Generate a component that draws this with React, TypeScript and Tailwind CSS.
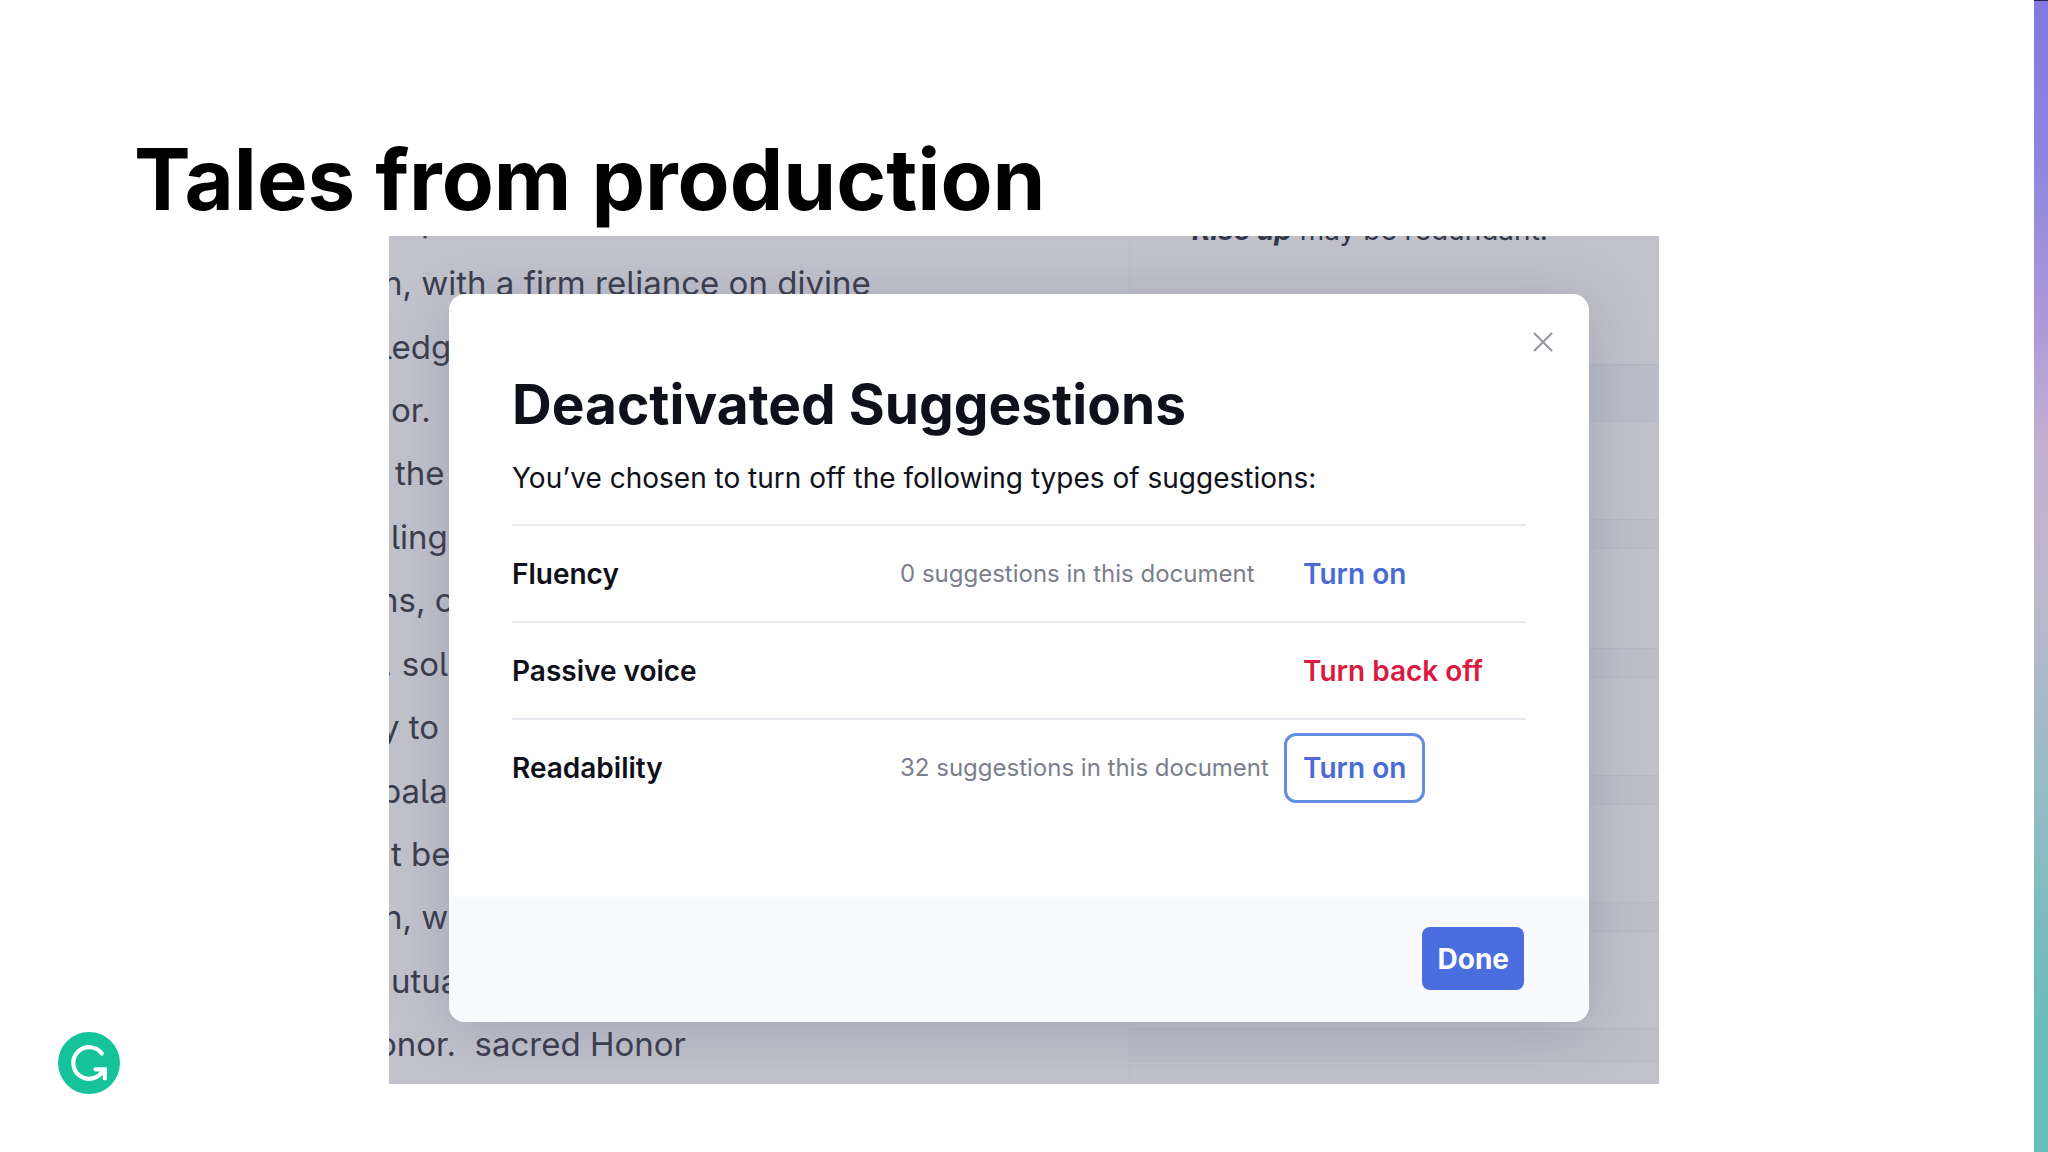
import { clsx } from "clsx";

const documentLines = [
  { text: "p", indent: "ml-8" },
  { text: "n, with a firm reliance on divine", indent: "-ml-1.5" },
  { text: "ledge", indent: "-ml-1.5" },
  { text: "or.", indent: "ml-0.5" },
  { text: "the", indent: "ml-1.5" },
  { text: "ling", indent: "ml-0.5" },
  { text: "ns, o", indent: "-ml-2.5" },
  { text: ". sol", indent: "-ml-1.5" },
  { text: "y to", indent: "-ml-2" },
  { text: "palac", indent: "-ml-2" },
  { text: "t be", indent: "ml-0.5" },
  { text: "n, w", indent: "-ml-1.5" },
  { text: "utua", indent: "ml-0.5" },
  { text: "onor.\u00a0 sacred Honor", indent: "-ml-3" },
];

const suggestions = [
  { name: "Fluency", count: "0 suggestions in this document", action: "Turn on" },
  { name: "Passive voice", count: "", action: "Turn back off", danger: true },
  { name: "Readability", count: "32 suggestions in this document", action: "Turn on", focused: true },
];

const DocumentText = () => (
  <div className="col-start-1 row-start-1 -mt-12 mb-2 grid auto-rows-fr text-[33px] text-[#3b3d4c] [font-feature-settings:'cv05']">
    {documentLines.map((line) => (
      <p key={line.text} className={clsx("flex items-center whitespace-pre leading-10", line.indent)}>
        {line.text}
      </p>
    ))}
  </div>
);

const SidePanel = () => (
  <aside className="col-start-1 row-start-1 ml-[740px] flex flex-col border-l border-[#b9bac7] bg-[#c1c1cb]">
    <div className="h-32">
      <p className="-mt-[22px] ml-[62px] whitespace-nowrap text-[28px] leading-8 text-[#34364a]">
        <b className="italic">Rise up</b> may be redundant.
      </p>
    </div>
    <div className="h-[57px] border-t border-[#b4b7c4] bg-[#babdc9]" />
    <div className="h-[99px] border-y border-[#b8b8c5]" />
    <div className="h-7 bg-[#bebec9]" />
    <div className="h-[101px] border-y border-[#b8b8c5]" />
    <div className="h-7 bg-[#bebec9]" />
    <div className="h-[99px] border-y border-[#b8b8c5]" />
    <div className="h-7 bg-[#bebec9]" />
    <div className="h-[99px] border-y border-[#b8b8c5]" />
    <div className="h-7 bg-[#bebec9]" />
    <div className="h-[98px] border-y border-[#b8b8c5]" />
    <div className="h-8 bg-[#bebec9]" />
    <div className="flex-1 border-t border-[#b8b8c5]" />
  </aside>
);

const Modal = () => (
  <section
    role="dialog"
    aria-labelledby="modal-title"
    className="z-10 col-start-1 row-start-1 mt-[58px] mr-[70px] mb-[62px] ml-[60px] flex flex-col overflow-hidden rounded-2xl bg-[#fefefe] shadow-[0_10px_60px_rgba(80,85,120,0.26)]"
  >
    <div className="flex justify-end pt-8 pr-[30px]">
      <button type="button" aria-label="Close" className="flex size-8 items-center justify-center">
        <svg viewBox="0 0 20 20" className="size-5" fill="none" stroke="#9395a3" strokeWidth="2">
          <path d="M1 1 19 19M19 1 1 19" />
        </svg>
      </button>
    </div>
    <div className="flex-1 px-[63px]">
      <h2 id="modal-title" className="mt-3 text-[55px] leading-[68px] font-bold text-[#0e101a]">
        Deactivated Suggestions
      </h2>
      <p className="mt-[22px] text-[28px] leading-9 text-[#0e101a]">
        You’ve chosen to turn off the following types of suggestions:
      </p>
      <ul className="mt-7">
        {suggestions.map((item) => (
          <li
            key={item.name}
            className="grid h-[97px] grid-cols-[388px_384px_1fr] items-center border-t-2 border-[#e9eaf0]"
          >
            <span className="text-[28px] font-semibold text-[#0e101a]">{item.name}</span>
            <span className="text-2xl whitespace-nowrap text-[#7b7e8c]">{item.count}</span>
            <div>
              <button
                type="button"
                className={clsx(
                  "h-[70px] rounded-[12px] border-[3px] px-4 text-[28px] font-semibold whitespace-nowrap",
                  item.danger ? "text-[#d91b42]" : "text-[#4a6bd4]",
                  item.focused ? "border-[#658ce0]" : "border-transparent"
                )}
              >
                {item.action}
              </button>
            </div>
          </li>
        ))}
      </ul>
    </div>
    <footer className="flex h-[125px] items-center justify-end bg-[#f9faff] px-[65px] pb-0.5">
      <button type="button" className="h-[63px] rounded-lg bg-[#4a6ee0] px-[15px] text-[28px] font-bold text-white">
        Done
      </button>
    </footer>
  </section>
);

const Logo = () => (
  <svg viewBox="0 0 62 62" className="size-[62px]" role="img" aria-label="Grammarly">
    <circle cx="31" cy="31" r="31" fill="#15c39a" />
    <g fill="none" stroke="#fff" strokeWidth="4.2" strokeLinecap="round">
      <path d="M43.800 21.600A15.800 15.800 0 1 0 45 38.500" />
      <path d="M37.500 37.300H46.800V46.500" strokeLinejoin="miter" />
    </g>
  </svg>
);

const App = () => {
  return (
    <div className="flex min-h-screen bg-white font-['Inter',sans-serif]">
      <main className="flex flex-1 flex-col">
        <h1 className="mt-32 ml-[134px] text-[85px] leading-[104px] font-bold text-black">
          Tales from production
        </h1>
        <div className="flex items-end">
          <div className="-mb-2.5 flex w-[389px] shrink-0 pl-[58px]">
            <Logo />
          </div>
          <div className="mt-1 mr-[375px] grid h-[848px] flex-1 overflow-hidden bg-[#c1c2cc]">
            <DocumentText />
            <SidePanel />
            <Modal />
          </div>
        </div>
      </main>
      <div className="w-3.5 border-t border-[#26263a] bg-[linear-gradient(#8079e0,#8b84df_12%,#a594da_25%,#c3aed2_38%,#bbb8ca_52%,#9cbcc5_66%,#7bbcc0_80%,#66bdba_93%)]" />
    </div>
  );
};

export default App;
